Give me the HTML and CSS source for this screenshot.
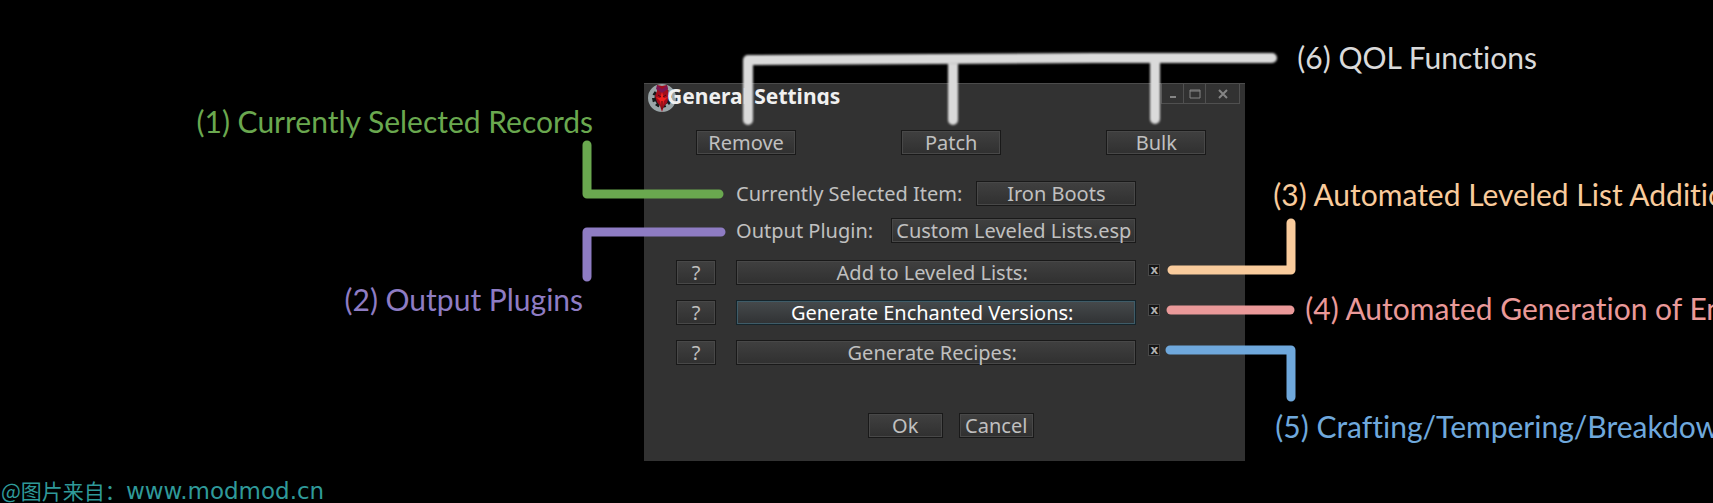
FILE: index.html
```html
<!DOCTYPE html>
<html lang="en">
<head>
  <meta charset="UTF-8" />
  <meta name="viewport" content="width=device-width, initial-scale=1.0"/>
  <title>General Settings</title>
  <link rel="stylesheet" href="styles.css">
</head>
<body>
  <main class="stage">
    <section class="window">
      <header class="title-bar">
        <svg class="app-icon" viewBox="0 0 30 28" aria-hidden="true">
          <circle cx="15" cy="14" r="12" fill="#16191a" stroke="#9aa5a8" stroke-width="4"/>
          <circle cx="15" cy="14" r="9" fill="none" stroke="#9aa5a8" stroke-width="3" stroke-dasharray="3 4"/>
          <path d="M10 1l5 1 5-1 1 6 1 5-2 7-3 3-2 6-2-6-3-4-2-6 2-5z" fill="#a30d1c"/>
          <path d="M10 1l5 4 5-4 1 4-6 4-6-4z" fill="#7c1450"/>
          <path d="M9 13l4 1 2-6 2 6 4-1-4 4-2 8-2-8z" fill="#f0221f"/>
          <path d="M11 11l3 2M19 11l-3 2M15 17v8" stroke="#4b0610" fill="none"/>
        </svg>
        <h1>General Settings</h1>
        <div class="window-controls">
          <button aria-label="Minimize"><svg viewBox="0 0 12 12"><path d="M3 9h6" stroke-width="2"/></svg></button>
          <button aria-label="Maximize"><svg viewBox="0 0 12 12"><path d="M1 2h10v8H1zM1 3h10"/></svg></button>
          <button class="close" aria-label="Close"><svg viewBox="0 0 12 12"><path d="M2 2l8 8M10 2l-8 8" stroke-width="2"/></svg></button>
        </div>
      </header>

      <div class="actions">
        <button class="btn">Remove</button>
        <button class="btn">Patch</button>
        <button class="btn">Bulk</button>
      </div>

      <div class="fields">
        <div class="field">
          <label for="item">Currently Selected Item:</label>
          <button class="btn item" id="item">Iron Boots</button>
        </div>
        <div class="field">
          <label for="plugin">Output Plugin:</label>
          <button class="btn plugin" id="plugin">Custom Leveled Lists.esp</button>
        </div>
      </div>

      <div class="options">
        <div class="option">
          <button class="btn help">?</button>
          <button class="btn wide">Add to Leveled Lists:</button>
          <input type="checkbox" aria-label="Add to Leveled Lists" checked>
        </div>
        <div class="option">
          <button class="btn help">?</button>
          <button class="btn wide active">Generate Enchanted Versions:</button>
          <input type="checkbox" aria-label="Generate Enchanted Versions" checked>
        </div>
        <div class="option">
          <button class="btn help">?</button>
          <button class="btn wide">Generate Recipes:</button>
          <input type="checkbox" aria-label="Generate Recipes" checked>
        </div>
      </div>

      <footer class="dialog-buttons">
        <button class="btn">Ok</button>
        <button class="btn">Cancel</button>
      </footer>

      <!-- Callouts left of the window -->
      <svg class="lines lines-left" viewBox="0 0 160 160" aria-hidden="true">
        <path class="green" d="M13 14V63H145"/>
        <path class="purple" d="M13 146V101H147"/>
      </svg>
      <p class="note note-records">(1) Currently Selected Records</p>
      <p class="note note-plugins">(2) Output Plugins</p>

      <!-- Callouts right of the window -->
      <svg class="lines lines-right" viewBox="0 0 150 200" aria-hidden="true">
        <path class="peach" d="M12 61H131V14"/>
        <path class="pink" d="M11 101H130"/>
        <path class="blue" d="M10 141H131V188"/>
      </svg>
      <svg class="lines lines-top" viewBox="0 0 560 90" aria-hidden="true">
        <path d="M14 81V21L361 19H538M219 20V81M421 19V80"/>
      </svg>
      <p class="note note-qol">(6) QOL Functions</p>
      <p class="note note-lists">(3) Automated Leveled List Additions</p>
      <p class="note note-enchant">(4) Automated Generation of Enchantments</p>
      <p class="note note-craft">(5) Crafting/Tempering/Breakdown</p>
    </section>

    <p class="credit"><span lang="zh">@图片来自：</span>www.modmod.cn</p>
  </main>
</body>
</html>
```

FILE: styles.css
```css
* {
  box-sizing: border-box;
}

body {
  margin: 0;
  background: #000;
  color: #c0c0c0;
  font-family: "Noto Sans", sans-serif;
  font-size: 20px;
}

.stage {
  position: relative;
  min-height: 100vh;
  padding: 83px 0 40px;
  overflow: hidden;
}

.window {
  position: relative;
  width: 35.1%;
  min-width: 580px;
  margin-left: 37.6%;
  padding-bottom: 23px;
  background: #323232;
  border-top: 1px solid #4c4c4c;
}

/* Title bar */
.title-bar {
  display: flex;
  align-items: flex-start;
  height: 20px;
  padding: 0 5px 0 3px;
}

.app-icon {
  flex: none;
  width: 30px;
  height: 28px;
}

h1 {
  height: 21px;
  margin: 0 auto 0 -10px;
  overflow: hidden;
  color: #f0f0f0;
  font-size: 21px;
  line-height: 24px;
  white-space: nowrap;
}

.window-controls {
  display: flex;
  border: 1px solid #505050;
  border-top: 0;
}

.window-controls button {
  display: flex;
  align-items: center;
  justify-content: center;
  width: 22px;
  height: 19px;
  padding: 0;
  background: none;
  border: 0;
  border-right: 1px solid #505050;
}

.window-controls .close {
  width: 33px;
  border-right: 0;
}

.window-controls svg {
  width: 12px;
  height: 12px;
  fill: none;
  stroke: #858585;
}

/* Buttons */
.btn {
  height: 25px;
  padding: 0;
  background: linear-gradient(#404040, #303030);
  border: 1px solid #191919;
  box-shadow: inset 0 0 0 1px #484848;
  color: #c0c0c0;
  font: inherit;
  line-height: 22px;
  white-space: nowrap;
}

.btn.active {
  background: linear-gradient(#464a4c, #303234);
  border-color: #14242b;
  box-shadow: inset 0 0 0 1px #3f5c68;
  color: #fff;
}

.actions {
  display: flex;
  justify-content: space-between;
  padding: 26px 39px 26px 52px;
}

.actions .btn {
  width: 100px;
}

.fields {
  display: grid;
  gap: 12px;
  padding: 0 109px 17px 92px;
}

.field {
  display: flex;
  justify-content: space-between;
  align-items: center;
  height: 25px;
  white-space: nowrap;
}

.item {
  width: 160px;
}

.plugin {
  width: 245px;
}

.options {
  display: grid;
  gap: 15px;
  padding: 0 85px 48px 32px;
}

.option {
  display: flex;
}

.help {
  width: 40px;
  margin-right: 20px;
}

.wide {
  flex: 1;
  margin-right: 12px;
  padding-right: 8px;
}

input[type="checkbox"] {
  display: grid;
  place-content: center;
  width: 12px;
  height: 12px;
  margin: 4px 0 0;
  appearance: none;
  background: #151515;
  border: 1px solid #484848;
}

input[type="checkbox"]:checked::before {
  content: "x";
  color: #b0b0b0;
  font: bold 12px/8px "DejaVu Sans", sans-serif;
}

.dialog-buttons {
  display: flex;
  justify-content: center;
  gap: 16px;
  padding-left: 12px;
}

.dialog-buttons .btn {
  width: 75px;
}

/* Callouts drawn over and around the window */
.lines {
  position: absolute;
  fill: none;
  stroke-width: 9px;
  stroke-linecap: round;
  stroke-linejoin: round;
  pointer-events: none;
}

.lines-left {
  top: 47px;
  left: -70px;
  width: 160px;
  height: 160px;
}

.lines-right {
  top: 125px;
  left: calc(100% - 85px);
  width: 150px;
  height: 200px;
}

.lines-top {
  top: -45px;
  left: 90px;
  width: 560px;
  height: 90px;
  filter: blur(1px);
  stroke: #dadada;
  stroke-width: 10px;
}

.green {
  stroke: #6aa84f;
}

.purple {
  stroke: #8e7cc3;
}

.peach {
  stroke: #f9cb9c;
}

.pink {
  stroke: #ea9999;
}

.blue {
  stroke: #6fa8dc;
}

.note {
  position: absolute;
  margin: 0;
  font-family: Lato, "Noto Sans", sans-serif;
  font-size: 30px;
  font-variant-ligatures: none;
  line-height: 40px;
  white-space: nowrap;
}

.note-records {
  top: 17px;
  right: calc(100% + 51px);
  color: #6aa84f;
}

.note-plugins {
  top: 195px;
  right: calc(100% + 61px);
  color: #8e7cc3;
}

.note-qol {
  top: -47px;
  left: calc(100% + 52px);
  color: #dadada;
}

.note-lists {
  top: 90px;
  left: calc(100% + 28px);
  color: #f9cb9c;
}

.note-enchant {
  top: 204px;
  left: calc(100% + 60px);
  color: #ea9999;
}

.note-craft {
  top: 322px;
  left: calc(100% + 30px);
  color: #6fa8dc;
}

.credit {
  position: absolute;
  bottom: 0;
  left: 1px;
  margin: 0;
  color: #2f9a9a;
  font: 23px/24px "DejaVu Sans", "Noto Sans CJK SC", sans-serif;
}

.credit span {
  font: 21px/24px "Noto Sans CJK SC", sans-serif;
}
```
